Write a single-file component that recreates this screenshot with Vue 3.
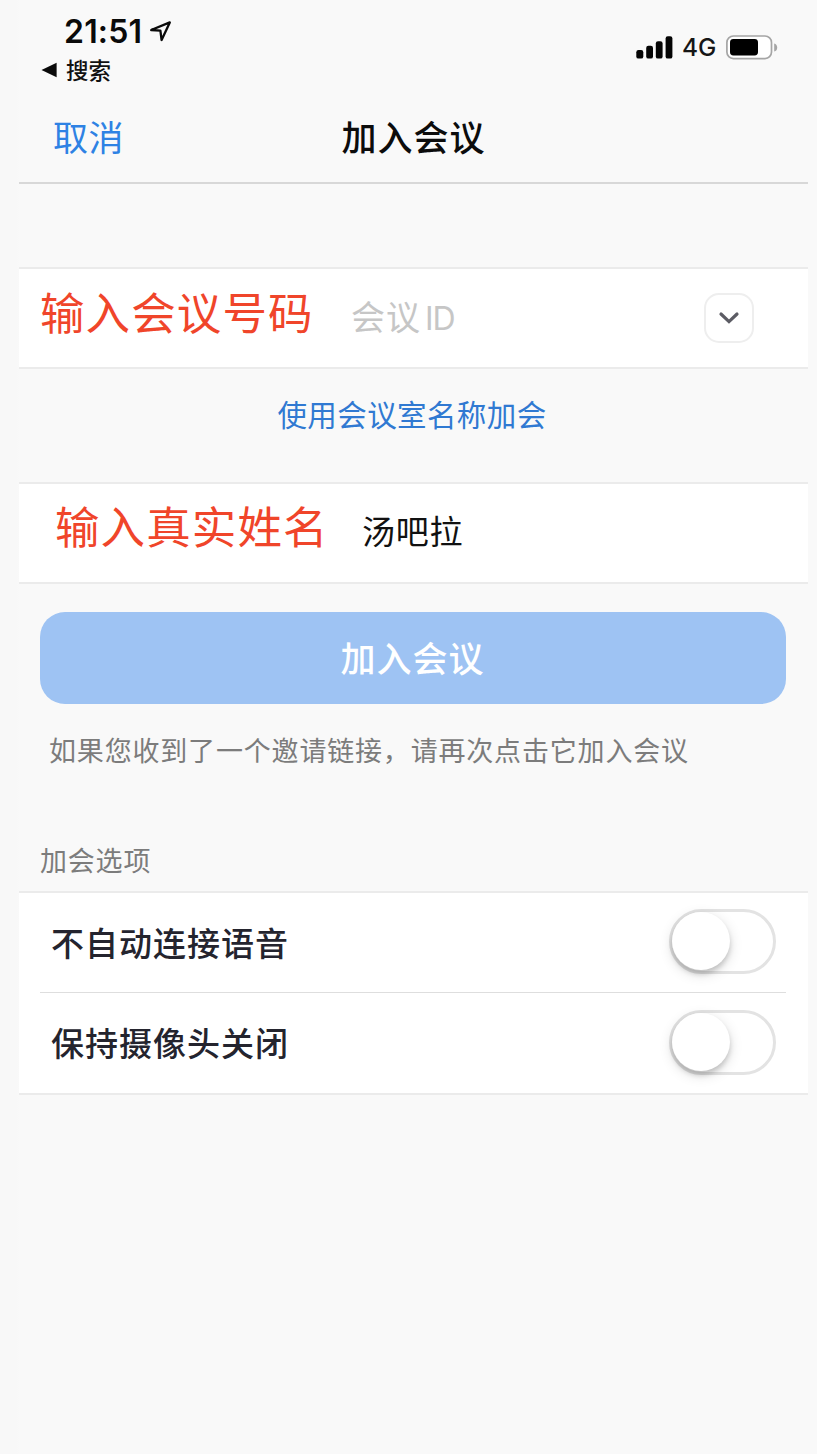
<script setup>
import { ref } from 'vue'

const meetingId = ref('')
const options = ref([
  { label: '不自动连接语音', on: false },
  { label: '保持摄像头关闭', on: false }
])
</script>

<template>
  <div class="page">
    <div class="screen">
      <header class="status">
        <div class="status-left">
          <div class="time-row">
            <span class="time">21:51</span>
            <svg class="locate" width="24" height="24" viewBox="0 0 24 24">
              <path d="M2.2 10 L20.8 2.4 L12.6 20 L11.4 10.6 Z" fill="none" stroke="#0a0a0a" stroke-width="2.3" stroke-linejoin="round" />
            </svg>
          </div>
          <div class="back-row">
            <svg width="17" height="16" viewBox="0 0 17 16"><path d="M.5 8 L15.6 .8 V15.2 Z" fill="#0a0a0a" /></svg>
            <span class="back">搜索</span>
          </div>
        </div>
        <div class="status-right">
          <svg width="37" height="23" viewBox="0 0 37 23" fill="#050505">
            <rect x=".3" y="14" width="7" height="8.6" rx="2.2" />
            <rect x="10.2" y="9.8" width="6.8" height="12.8" rx="2.2" />
            <rect x="19.8" y="5.2" width="6.8" height="17.4" rx="2.2" />
            <rect x="29.6" y=".2" width="6.8" height="22.4" rx="2.2" />
          </svg>
          <span class="network">4G</span>
          <svg width="52" height="25" viewBox="0 0 52 25">
            <rect x=".9" y="1" width="44.6" height="22.6" rx="6.5" fill="#fff" stroke="#a5a5a5" stroke-width="1.7" />
            <rect x="4" y="4" width="28" height="16.4" rx="3.4" fill="#000" />
            <path d="M48.2 8.4 C52.2 9 52.2 16 48.2 16.6 Z" fill="#a5a5a5" />
          </svg>
        </div>
      </header>

      <nav class="nav">
        <span class="cancel">取消</span>
        <h1 class="title">加入会议</h1>
        <span></span>
      </nav>

      <section class="row id-row">
        <span class="note note-id">输入会议号码</span>
        <span class="placeholder">会议<span class="latin">ID</span></span>
        <button class="more" type="button">
          <svg width="22" height="16" viewBox="0 0 22 16"><path d="M3 4 L11 11.6 L19 4" fill="none" stroke="#5c5c64" stroke-width="3.2" stroke-linecap="round" stroke-linejoin="miter" /></svg>
        </button>
      </section>

      <div class="link">使用会议室名称加会</div>

      <section class="row name-row">
        <span class="note note-name">输入真实姓名</span>
        <span class="name">汤吧拉</span>
      </section>

      <button class="join" type="button" :disabled="!meetingId">加入会议</button>
      <p class="hint">如果您收到了一个邀请链接，请再次点击它加入会议</p>
      <h2 class="group-title">加会选项</h2>

      <section class="options">
        <div v-for="option in options" :key="option.label" class="option">
          <span class="option-label">{{ option.label }}</span>
          <span class="switch" @click="option.on = !option.on">
            <span class="knob" :class="{ on: option.on }"></span>
          </span>
        </div>
      </section>
    </div>
  </div>
</template>

<style>
body {
  background: #f9f9f9;
}
</style>

<style scoped>
* {
  box-sizing: border-box;
}
.page {
  width: 817px;
  height: 1454px;
  padding: 0 9px 0 19px;
  overflow: hidden;
  background: linear-gradient(90deg, #f8f8f8 0 16px, #f9f9f9 20px);
  font-family: "Noto Sans CJK SC", sans-serif;
  white-space: nowrap;
}
.screen {
  height: 1454px;
}
.status {
  display: flex;
  justify-content: space-between;
  height: 92px;
}
.status-left {
  padding: 13px 0 0 22px;
}
.time-row {
  display: flex;
  align-items: center;
  height: 38px;
  padding-left: 23px;
}
.time {
  width: 85px;
  font: 600 32px/38px Inter, sans-serif;
  letter-spacing: .2px;
  color: #0a0a0a;
}
.back-row {
  display: flex;
  align-items: center;
  gap: 8px;
  height: 38px;
}
.back {
  height: 36px;
  font-size: 22.5px;
  font-weight: 500;
  line-height: 34px;
  color: #111;
}
.status-right {
  display: flex;
  align-items: center;
  height: 46px;
  margin: 24px 30px 0 0;
}
.network {
  width: 53px;
  padding-left: 9px;
  font: 500 24.5px/46px Inter, sans-serif;
  color: #161616;
}
.nav {
  display: grid;
  grid-template-columns: 1fr auto 1fr;
  align-items: center;
  height: 92px;
  padding-bottom: 2px;
  border-bottom: 2px solid #d8d8d8;
}
.cancel {
  padding-left: 34px;
  font-size: 35px;
  line-height: 50px;
  letter-spacing: .4px;
  color: #2e82e4;
}
.title {
  margin: 0;
  font-size: 35px;
  font-weight: 500;
  line-height: 50px;
  letter-spacing: 1px;
  color: #0c0c0c;
}
.row {
  display: flex;
  height: 102px;
  background: #fff;
  border: solid #ebebeb;
  border-width: 2px 0;
}
.id-row {
  margin-top: 83px;
}
.note {
  font-size: 44.5px;
  line-height: 60px;
  letter-spacing: 1.1px;
  color: #f0452a;
}
.note-id {
  width: 332px;
  padding: 12px 0 0 21px;
}
.note-name {
  width: 343px;
  padding: 11px 0 0 36px;
}
.placeholder {
  padding-top: 22px;
  font-size: 34px;
  font-weight: 400;
  line-height: 50px;
  letter-spacing: 1px;
  color: #c6c6c6;
}
.latin {
  margin-left: 4px;
  font: 400 32px/50px Inter, sans-serif;
  letter-spacing: -1px;
}
.more {
  display: flex;
  align-items: center;
  justify-content: center;
  width: 50px;
  height: 50px;
  margin: 24px 54px 0 auto;
  padding: 0;
  background: #fff;
  border: 2px solid #eee;
  border-radius: 15px;
}
.link {
  height: 113px;
  padding: 22px 3px 0 0;
  font-size: 29.5px;
  line-height: 44px;
  letter-spacing: .4px;
  text-align: center;
  color: #3079d2;
}
.name {
  padding-top: 21px;
  font-size: 33px;
  line-height: 50px;
  letter-spacing: .8px;
  color: #111;
}
.join {
  display: block;
  width: 746px;
  height: 92px;
  margin: 28px 0 0 21px;
  padding: 0 1px 3px 0;
  border: 0;
  border-radius: 25px;
  background: #9ec3f3;
  color: #fff;
  font-family: inherit;
  font-size: 35px;
  font-weight: 500;
  letter-spacing: 1px;
}
.hint {
  margin: 25px 0 0 30px;
  font-size: 27px;
  line-height: 42px;
  letter-spacing: .82px;
  color: #7c7c7c;
}
.group-title {
  margin: 68px 0 0 21px;
  font-size: 27px;
  font-weight: 400;
  line-height: 42px;
  letter-spacing: .8px;
  color: #7c7c7c;
}
.options {
  margin-top: 10px;
  background: #fff;
  border: solid #ebebeb;
  border-width: 2px 0;
}
.option {
  display: flex;
  align-items: center;
  justify-content: space-between;
  height: 99px;
  margin: 0 22px 0 21px;
  padding: 0 10px 2px 11px;
}
.option + .option {
  height: 101px;
  border-top: 1px solid #dedede;
}
.option-label {
  font-size: 33px;
  font-weight: 500;
  line-height: 50px;
  letter-spacing: 1px;
  color: #24242e;
}
.switch {
  display: block;
  width: 107px;
  height: 65px;
  border: 3px solid #e3e3e3;
  border-radius: 33px;
}
.knob {
  display: block;
  width: 58px;
  height: 58px;
  border-radius: 50%;
  background: #fff;
  box-shadow: 0 4px 5px rgba(0, 0, 0, .16), 0 4px 14px rgba(0, 0, 0, .14);
}
.knob.on {
  margin-left: 43px;
}
</style>
